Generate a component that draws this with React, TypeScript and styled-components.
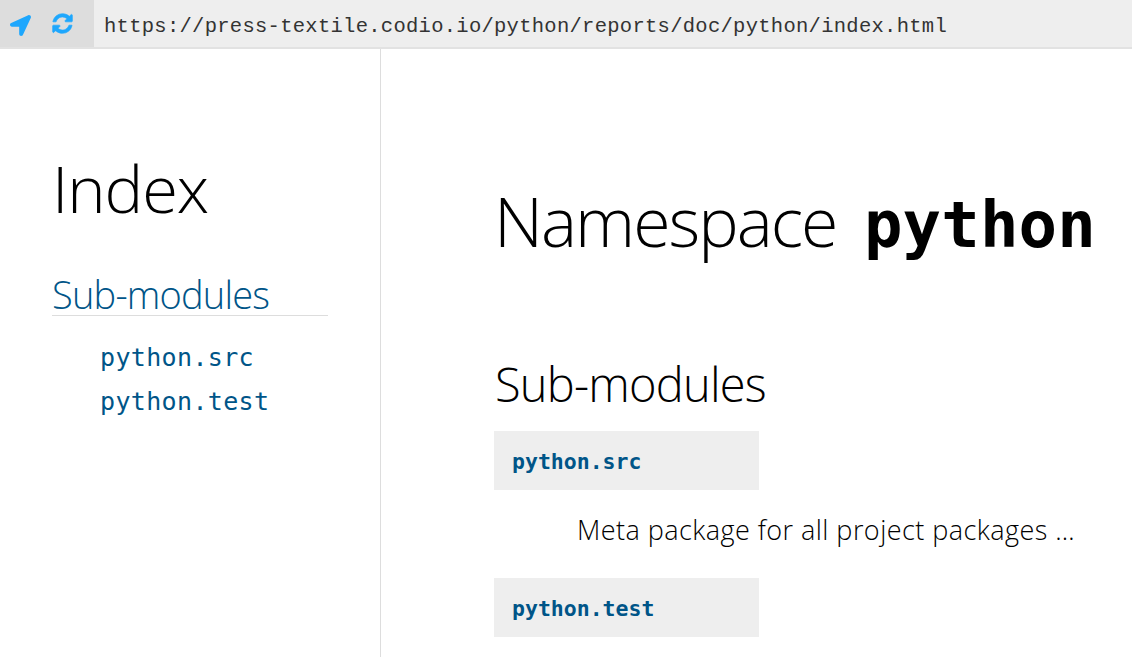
import styled, { createGlobalStyle } from 'styled-components';
import { FaLocationArrow } from 'react-icons/fa';

const GlobalStyle = createGlobalStyle`
  html, body {
    margin: 0;
    padding: 0;
    height: 100%;
    overflow: hidden;
    background: #fff;
    font-family: "Open Sans", sans-serif;
    color: #000;
  }
`;

const Page = styled.div`
  width: 1132px;
  height: 657px;
  display: flex;
  flex-direction: column;
  overflow: hidden;
`;

const Toolbar = styled.header`
  flex: none;
  height: 47px;
  display: flex;
  background: #eeeeee;
  border-bottom: 2px solid #e2e2e2;
`;

const NavButtons = styled.div`
  width: 94px;
  display: flex;
  align-items: center;
  gap: 21px;
  padding-left: 10px;
  box-sizing: border-box;
  background: #dddddd;
  color: #1ea7fd;
  font-size: 21px;

  & > svg:first-child {
    margin-top: 3px;
  }
`;

const RefreshIcon = styled.svg`
  width: 23px;
  height: 23px;
  margin-left: -1px;
  fill: currentColor;
  stroke: currentColor;
  stroke-width: 50;
`;

const Url = styled.div`
  padding-left: 10px;
  font-family: "Liberation Mono", monospace;
  font-size: 20.5px;
  letter-spacing: 0.28px;
  line-height: 53px;
  color: #333;
`;

const Body = styled.div`
  flex: 1;
  display: flex;
  min-height: 0;
`;

const Sidebar = styled.aside`
  flex: none;
  width: 381px;
  box-sizing: border-box;
  padding: 95px 52px 0;
  border-right: 1px solid #dddddd;
`;

const IndexTitle = styled.h1`
  margin: 0;
  font-size: 65px;
  line-height: 88px;
  font-weight: 300;
  letter-spacing: -1.1px;
`;

const SideHeading = styled.h3`
  margin: 36px 0 0;
  width: 276px;
  height: 47px;
  font-size: 38px;
  line-height: 53px;
  font-weight: 300;
  letter-spacing: -0.8px;
  color: #005588;
  border-bottom: 1px solid #dddddd;
`;

const SideList = styled.ul`
  list-style: none;
  margin: 20px 0 0;
  padding: 0 0 0 48px;
`;

const SideLink = styled.li`
  font-family: "DejaVu Sans Mono", monospace;
  font-size: 25px;
  line-height: 44px;
  letter-spacing: 0.35px;
  color: #005588;
`;

const Main = styled.main`
  flex: 1;
  padding: 124px 0 0 114px;
  min-width: 0;
`;

const PageTitle = styled.h1`
  margin: 0 0 0 -1px;
  font-size: 68px;
  line-height: 96px;
  font-weight: 300;
  letter-spacing: -2px;
  white-space: nowrap;
`;

const Mono = styled.span`
  font-family: "DejaVu Sans Mono", monospace;
  font-weight: 700;
  font-size: 64px;
  letter-spacing: 0.1px;
  margin-left: 12px;
`;

const SectionTitle = styled.h2`
  margin: 79px 0 0;
  font-size: 47px;
  line-height: 64px;
  font-weight: 300;
  letter-spacing: -0.8px;
`;

const ModuleName = styled.div<{ $gap: number }>`
  width: 265px;
  height: 59px;
  margin: ${props => props.$gap}px 0 0 -1px;
  box-sizing: border-box;
  padding-left: 18px;
  background: #eeeeee;
  font-family: "DejaVu Sans Mono", monospace;
  font-weight: 700;
  font-size: 21.5px;
  line-height: 61px;
  color: #005588;
`;

const ModuleDesc = styled.p`
  margin: 20px 0 0 82px;
  font-size: 27px;
  line-height: 40px;
  letter-spacing: 0.45px;
  font-weight: 300;
  white-space: nowrap;
`;

function App() {
  return (
    <Page>
      <GlobalStyle />
      <Toolbar>
        <NavButtons>
          <FaLocationArrow />
          <RefreshIcon viewBox="0 0 1792 1792">
            <path d="M1639 1056q0 5-1 7-64 268-268 434.5t-478 166.5q-146 0-282.5-55t-243.5-157l-129 129q-19 19-45 19t-45-19-19-45v-448q0-26 19-45t45-19h448q26 0 45 19t19 45-19 45l-137 137q71 66 161 102t187 36q134 0 250-65t186-179q11-17 53-117 8-23 30-23h192q13 0 22.5 9.5t9.5 22.5zm25-800v448q0 26-19 45t-45 19h-448q-26 0-45-19t-19-45 19-45l138-138q-148-137-349-137-134 0-250 65t-186 179q-11 17-53 117-8 23-30 23h-199q-13 0-22.5-9.5t-9.5-22.5v-7q65-268 270-434.5t480-166.5q146 0 284 55.5t245 156.5l130-129q19-19 45-19t45 19 19 45z" />
          </RefreshIcon>
        </NavButtons>
        <Url>https://press-textile.codio.io/python/reports/doc/python/index.html</Url>
      </Toolbar>
      <Body>
        <Sidebar>
          <IndexTitle>Index</IndexTitle>
          <SideHeading>Sub-modules</SideHeading>
          <SideList>
            <SideLink>python.src</SideLink>
            <SideLink>python.test</SideLink>
          </SideList>
        </Sidebar>
        <Main>
          <PageTitle>
            Namespace <Mono>python</Mono>
          </PageTitle>
          <SectionTitle>Sub-modules</SectionTitle>
          <ModuleName $gap={15}>python.src</ModuleName>
          <ModuleDesc>Meta package for all project packages …</ModuleDesc>
          <ModuleName $gap={28}>python.test</ModuleName>
        </Main>
      </Body>
    </Page>
  );
}

export default App;
